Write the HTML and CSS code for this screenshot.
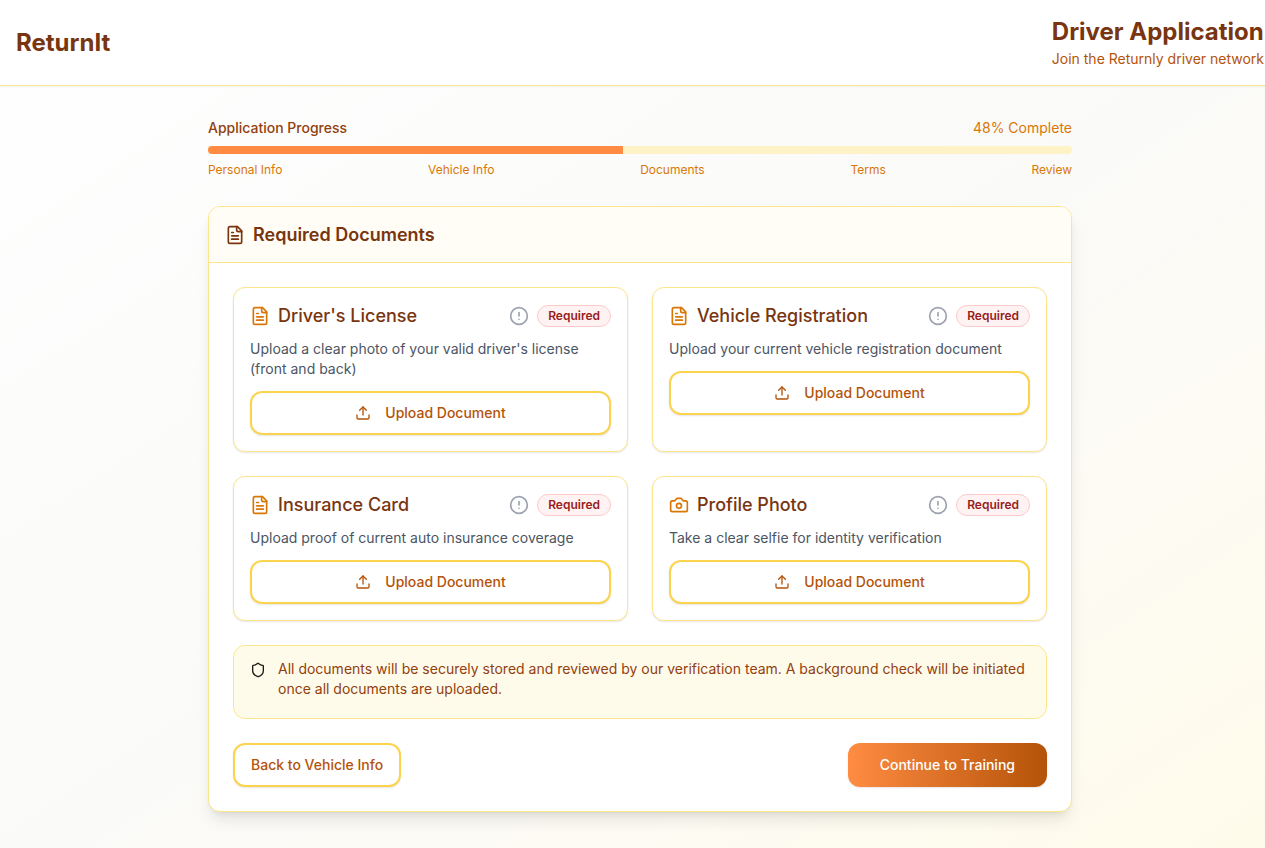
FILE: index.html
```html
<!DOCTYPE html>
<html lang="en">
<head>
<meta charset="utf-8">
<meta name="viewport" content="width=device-width, initial-scale=1">
<title>Driver Application - ReturnIt</title>
<link rel="stylesheet" href="styles.css">
</head>
<body>
<svg class="sprite" aria-hidden="true">
  <symbol id="file-text" viewBox="0 0 24 24"><path d="M15 2H6a2 2 0 0 0-2 2v16a2 2 0 0 0 2 2h12a2 2 0 0 0 2-2V7Z"/><path d="M14 2v4a2 2 0 0 0 2 2h4"/><path d="M10 9H8"/><path d="M16 13H8"/><path d="M16 17H8"/></symbol>
  <symbol id="camera" viewBox="0 0 24 24"><path d="M14.5 4h-5L7 7H4a2 2 0 0 0-2 2v9a2 2 0 0 0 2 2h16a2 2 0 0 0 2-2V9a2 2 0 0 0-2-2h-3l-2.500-3z"/><circle cx="12" cy="13" r="3"/></symbol>
  <symbol id="alert" viewBox="0 0 24 24"><circle cx="12" cy="12" r="10"/><path d="M12 8v4"/><path d="M12 16h.01"/></symbol>
  <symbol id="upload" viewBox="0 0 24 24"><path d="M21 15v4a2 2 0 0 1-2 2H5a2 2 0 0 1-2-2v-4"/><path d="m17 8-5-5-5 5"/><path d="M12 3v12"/></symbol>
  <symbol id="shield" viewBox="0 0 24 24"><path d="M20 13c0 5-3.500 7.500-7.660 8.950a1 1 0 0 1-.67-.01C7.500 20.500 4 18 4 13V6a1 1 0 0 1 1-1c2 0 4.500-1.200 6.240-2.720a1.170 1.170 0 0 1 1.520 0C14.510 3.810 17 5 19 5a1 1 0 0 1 1 1z"/></symbol>
</svg>
<div class="page">
  <header class="site-header">
    <a class="logo" href="#">ReturnIt</a>
    <div class="heading">
      <h1>Driver Application</h1>
      <p>Join the Returnly driver network</p>
    </div>
  </header>
  <main class="content">
    <section class="progress">
      <div class="progress-head">
        <span class="progress-title" id="progress-title">Application Progress</span>
        <span class="progress-value">48% Complete</span>
      </div>
      <div class="bar" role="progressbar" aria-labelledby="progress-title" aria-valuenow="48" aria-valuemin="0" aria-valuemax="100"><div class="bar-fill" style="width: 48%"></div></div>
      <div class="steps"><span>Personal Info</span><span>Vehicle Info</span><span>Documents</span><span>Terms</span><span>Review</span></div>
    </section>
    <section class="card">
      <div class="card-head">
        <svg class="icon"><use href="#file-text"/></svg>
        <h2>Required Documents</h2>
      </div>
      <div class="card-body">
        <div class="documents">
          <article class="document">
            <div class="document-head">
              <svg class="icon icon-document"><use href="#file-text"/></svg>
              <h3>Driver's License</h3>
              <svg class="icon icon-status"><use href="#alert"/></svg>
              <span class="badge">Required</span>
            </div>
            <p>Upload a clear photo of your valid driver's license (front and back)</p>
            <button class="button button-outline button-upload" type="button"><svg class="icon icon-small"><use href="#upload"/></svg>Upload Document</button>
          </article>
          <article class="document">
            <div class="document-head">
              <svg class="icon icon-document"><use href="#file-text"/></svg>
              <h3>Vehicle Registration</h3>
              <svg class="icon icon-status"><use href="#alert"/></svg>
              <span class="badge">Required</span>
            </div>
            <p>Upload your current vehicle registration document</p>
            <button class="button button-outline button-upload" type="button"><svg class="icon icon-small"><use href="#upload"/></svg>Upload Document</button>
          </article>
          <article class="document">
            <div class="document-head">
              <svg class="icon icon-document"><use href="#file-text"/></svg>
              <h3>Insurance Card</h3>
              <svg class="icon icon-status"><use href="#alert"/></svg>
              <span class="badge">Required</span>
            </div>
            <p>Upload proof of current auto insurance coverage</p>
            <button class="button button-outline button-upload" type="button"><svg class="icon icon-small"><use href="#upload"/></svg>Upload Document</button>
          </article>
          <article class="document">
            <div class="document-head">
              <svg class="icon icon-document"><use href="#camera"/></svg>
              <h3>Profile Photo</h3>
              <svg class="icon icon-status"><use href="#alert"/></svg>
              <span class="badge">Required</span>
            </div>
            <p>Take a clear selfie for identity verification</p>
            <button class="button button-outline button-upload" type="button"><svg class="icon icon-small"><use href="#upload"/></svg>Upload Document</button>
          </article>
        </div>
        <div class="notice">
          <svg class="icon icon-small"><use href="#shield"/></svg>
          <p>All documents will be securely stored and reviewed by our verification team. A background check will be initiated once all documents are uploaded.</p>
        </div>
        <div class="actions">
          <button class="button button-outline" type="button">Back to Vehicle Info</button>
          <button class="button button-primary" type="button">Continue to Training</button>
        </div>
      </div>
    </section>
  </main>
</div>
</body>
</html>
```
FILE: styles.css
```css
*, *::before, *::after { box-sizing: border-box; }
html { overflow-x: hidden; }
body {
  margin: 0;
  overflow-x: hidden;
  font-family: Inter, "Liberation Sans", sans-serif;
  font-size: 14px;
  line-height: 20px;
  color: #1c1917;
}
h1, h2, h3, p { margin: 0; }
.sprite { display: none; }

.page {
  width: calc(100% + 15px);
  min-height: 100vh;
  background: linear-gradient(to bottom right, #ffffff, #fafaf9, #fffbeb);
}

.site-header {
  display: flex;
  align-items: center;
  justify-content: space-between;
  padding: 16px;
  background: #fff;
  border-bottom: 1px solid #fde68a;
  box-shadow: 0 1px 2px rgba(0, 0, 0, 0.05);
}
.logo {
  font-size: 24px;
  line-height: 32px;
  font-weight: 700;
  color: #78350f;
  text-decoration: none;
}
.heading { display: grid; gap: 1px; }
.heading h1 { font-size: 24px; line-height: 32px; font-weight: 700; color: #78350f; }
.heading p { color: #b45309; }

.content { max-width: 896px; margin: 0 auto; padding: 32px 16px; }

.progress { margin-bottom: 28px; }
.progress-head { display: flex; justify-content: space-between; margin-bottom: 8px; }
.progress-title { font-weight: 500; color: #92400e; }
.progress-value { color: #d97706; }
.bar { height: 8px; border-radius: 4px; overflow: hidden; background: #fef3c7; }
.bar-fill { height: 100%; background: #ff8c42; }
.steps {
  display: flex;
  justify-content: space-between;
  margin-top: 8px;
  font-size: 12px;
  line-height: 16px;
  color: #d97706;
}

.card {
  border: 1px solid #fde68a;
  border-radius: 12px;
  overflow: hidden;
  background: #fff;
  box-shadow: 0 10px 15px -3px rgba(0, 0, 0, 0.1), 0 4px 6px -4px rgba(0, 0, 0, 0.1);
}
.card-head {
  display: flex;
  align-items: center;
  gap: 8px;
  padding: 16px;
  color: #78350f;
  background: #fffdf5;
  border-bottom: 1px solid #fde68a;
}
.card-head h2 { font-size: 18px; line-height: 23px; font-weight: 600; }
.card-body { display: grid; gap: 24px; padding: 24px; }

.icon {
  flex: none;
  width: 20px;
  height: 20px;
  fill: none;
  stroke: currentColor;
  stroke-width: 2;
  stroke-linecap: round;
  stroke-linejoin: round;
}
.icon-small { width: 16px; height: 16px; }
.icon-document { color: #d97706; }
.icon-status { color: #9ca3af; }

.documents { display: grid; grid-template-columns: 1fr 1fr; gap: 24px; }
.document {
  padding: 16px;
  border: 1px solid #fde68a;
  border-radius: 12px;
  background: #fff;
  box-shadow: 0 1px 2px rgba(0, 0, 0, 0.1);
}
.document-head { display: flex; align-items: center; gap: 8px; margin-bottom: 12px; }
.document-head h3 { flex: 1; font-size: 18px; line-height: 23px; font-weight: 500; color: #78350f; }
.document p { margin-bottom: 12px; color: #4b5563; }
.badge {
  padding: 2px 10px;
  border: 1px solid #fecaca;
  border-radius: 12px;
  font-size: 12px;
  line-height: 16px;
  font-weight: 600;
  color: #991b1b;
  background: #fef2f2;
}

.button {
  display: inline-flex;
  align-items: center;
  justify-content: center;
  height: 44px;
  border-radius: 12px;
  font: inherit;
  font-weight: 500;
  cursor: pointer;
  box-shadow: 0 1px 2px rgba(0, 0, 0, 0.1);
}
.button-outline { padding: 0 16px; border: 2px solid #fcd34d; color: #b45309; background: #fff; }
.button-upload { width: 100%; gap: 14px; }
.button-primary { padding: 0 32px; border: 0; color: #fff; background: linear-gradient(to right, #ff8c42, #b45309); }

.notice {
  display: flex;
  gap: 12px;
  padding: 13px 16px 19px;
  border: 1px solid #fde68a;
  border-radius: 12px;
  background: #fffbeb;
}
.notice .icon { margin-top: 3px; }
.notice p { color: #92400e; }
.actions { display: flex; justify-content: space-between; }
```
